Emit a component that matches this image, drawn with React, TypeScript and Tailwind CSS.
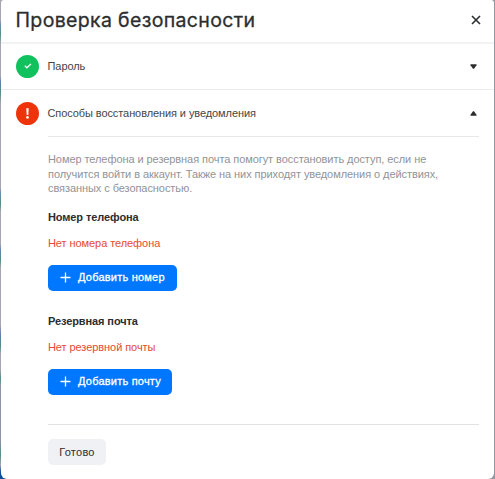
import { useState } from 'react'

const sections = [
  { id: 'phone', title: 'Номер телефона', empty: 'Нет номера телефона', action: 'Добавить номер', width: 'w-[129px]' },
  { id: 'email', title: 'Резервная почта', empty: 'Нет резервной почты', action: 'Добавить почту', width: 'w-[124px]' },
]

function Arrow({ up = false }: { up?: boolean }) {
  return (
    <svg width="7" height="5" viewBox="0 0 7 5" className="mr-[17px] shrink-0" fill="#2c2d2e">
      {up ? (
        <path d="M3 .3h1L6.5 3.8v1h-6v-1L3 .3Z" />
      ) : (
        <path d="M3 4.7h1L6.5 1.2v-1h-6v1L3 4.7Z" />
      )}
    </svg>
  )
}

export default function App() {
  const [open, setOpen] = useState(true)

  return (
    <div className="flex h-[479px] w-[495px] overflow-hidden bg-[linear-gradient(90deg,transparent_50%,#9297a0_50%),linear-gradient(180deg,#a8a5b2_0_20px,#6f8db5_24px,#4f8f83_34px,#a8a5b2_44px_76px,#5f7fae_82px,#4f8f83_92px,#a8a5b2_104px_188px,#6f8db5_192px,#4f8f83_204px,#a8a5b2_212px_244px,#6680b0_250px,#4f8f83_260px,#a8a5b2_268px_325px,#5f7fae_335px,#4f8f83_346px,#a8a5b2_354px_370px,#4f8f83_378px,#8f92a8_386px_440px,#4f8f83_455px,#a8a5b2_465px,#0d4f9c_472px)] px-px font-['Liberation_Sans',Arial,sans-serif] tracking-[-0.07px]">
      <div className="flex h-[479px] min-w-0 flex-1 flex-col rounded-t-[3px] rounded-b-[6px] bg-white text-[#2c2d2e]">
        <header className="flex h-[44px] items-center justify-between border-b-2 border-[#f3f3f4] pl-[14.5px] pr-[13px] pb-[3px]">
          <h1 className="whitespace-nowrap font-['Inter',sans-serif] text-[19.5px] font-normal leading-6 tracking-[0.35px] [-webkit-text-stroke:0.3px_#2c2d2e]">
            Проверка безопасности
          </h1>
          <button type="button" aria-label="Закрыть">
            <svg width="10" height="10" viewBox="0 0 10 10" fill="none" stroke="#2c2d2e" strokeWidth="1.6">
              <path d="m1 1 8 8m0-8-8 8" />
            </svg>
          </button>
        </header>

        {/* Пароль */}
        <div className="flex h-[46px] items-center border-b border-[#ebebed] pb-px pl-[15px]">
          <span className="flex size-[23px] items-center justify-center rounded-full bg-[#10c15e]">
            <svg width="8" height="6" viewBox="0 0 8 6" fill="none" stroke="white" strokeWidth="1.3">
              <path d="m.8 2.8 2.1 2L7 .9" />
            </svg>
          </span>
          <span className="ml-[8.5px] flex-1 text-[11px] leading-[14px] text-[#444546]">Пароль</span>
          <Arrow />
        </div>

        {/* Способы восстановления */}
        <button type="button" onClick={() => setOpen(!open)} className="flex h-[46px] shrink-0 items-center pl-[15px] text-left">
          <span className="flex size-[23px] items-center justify-center rounded-full bg-[#ed340a]">
            <svg width="3" height="11" viewBox="0 0 3 11" fill="white">
              <path d="M.3.3h2.4l-.4 6.8H.7L.3.3Z" />
              <circle cx="1.5" cy="9.4" r="1.3" />
            </svg>
          </span>
          <span className="ml-[8.5px] flex-1 whitespace-nowrap text-[11px] leading-[14px] tracking-[-0.09px] text-[#444546]">
            Способы восстановления и уведомления
          </span>
          <Arrow up={open} />
        </button>

        {open && (
          <div className="ml-[47px] mr-[15px] border-t border-[#e8e8ea] pt-[15px]">
            <p className="mb-[14px] whitespace-nowrap text-[11px] leading-[14.5px] text-[#919399]">
              Номер телефона и резервная почта помогут восстановить доступ, если не
              <br />
              получится войти в аккаунт. Также на них приходят уведомления о действиях,
              <br />
              связанных с безопасностью.
            </p>
            <div className="flex flex-col gap-[23px] whitespace-nowrap">
              {sections.map((s) => (
                <section key={s.id}>
                  <h2 className="h-[26px] text-[11px] font-bold leading-[14px] tracking-[-0.1px]">{s.title}</h2>
                  <p className="h-[29px] text-[11px] leading-[14px] text-[#e64a32]">{s.empty}</p>
                  <button
                    type="button"
                    className={`flex h-[26px] items-center rounded-[5px] bg-[#0077ff] pl-3 text-[11px] tracking-[0.22px] text-white [-webkit-text-stroke:0.3px_white] ${s.width}`}
                  >
                    <svg width="11" height="11" viewBox="0 0 11 11" stroke="white" strokeWidth="1.3">
                      <path d="M5.5.5v10M.5 5.5h10" />
                    </svg>
                    <span className="ml-[7px]">{s.action}</span>
                  </button>
                </section>
              ))}
            </div>
            <div className="mt-[29px] border-t border-[#e1e2e4] pt-[14px]">
              <button type="button" className="h-[26px] w-[58px] rounded-[5px] bg-[#f0f1f5] text-[11px] tracking-[0.25px]">
                Готово
              </button>
            </div>
          </div>
        )}
      </div>
    </div>
  )
}
